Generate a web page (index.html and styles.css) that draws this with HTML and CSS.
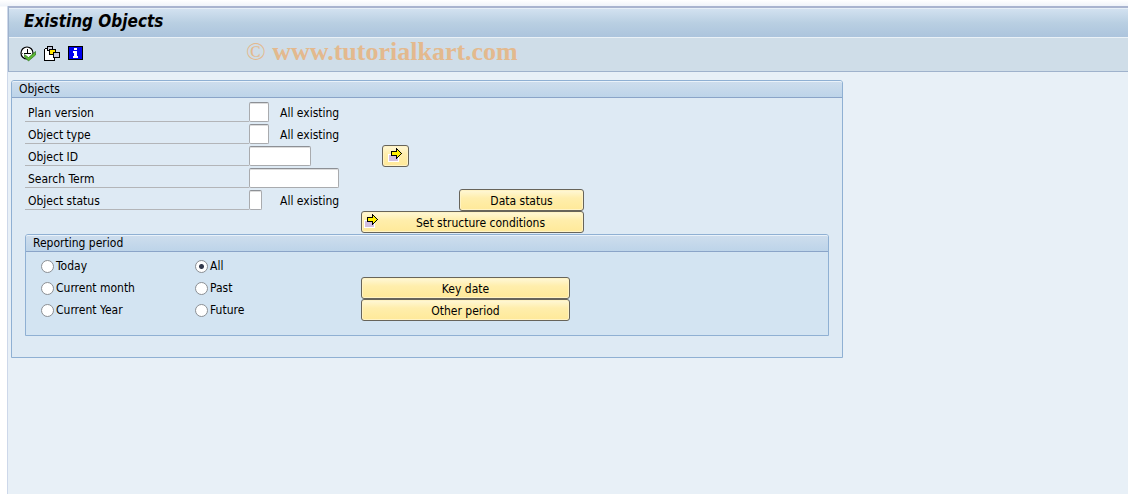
FILE: index.html
```html
<!DOCTYPE html>
<html lang="en">
<head>
  <meta charset="UTF-8">
  <title>Existing Objects</title>
  <meta name="viewport" content="width=device-width, initial-scale=1.0">
  <link rel="stylesheet" href="styles.css">
</head>
<body>
  <svg class="defs" width="0" height="0" aria-hidden="true">
    <symbol id="arrow" viewBox="0 0 16 16">
      <path fill="#fff" d="M0 6h11v8H0z"/>
      <path fill="#d2bfdf" d="M1 7h9v6H1z"/>
      <path fill="#000" d="M3 3h5V0h1v1h1v1h1v1h1v1h1v1h1v1h-1v1h-1v1h-1v1h-1v1H9v1H8V8H3z"/>
      <path fill="#ffee00" d="M4 4h5V2h1v1h1v1h1v1h1v1h-1v1h-1v1h-1v1H9V7H4z"/>
    </symbol>
  </svg>

  <div class="window">
    <header class="header">
      <h1 class="title">Existing Objects</h1>
      <div class="toolbar">
        <button type="button" class="tool" aria-label="Execute">
          <svg width="16" height="16" viewBox="0 0 16 16">
            <circle cx="7" cy="7" r="6" fill="#fff" stroke="#000" stroke-width="1.2"/>
            <path d="M7.500 3v5M4 7.500h7" stroke="#000" fill="none"/>
            <path d="M2 7.500h1M7.500 11v1" stroke="#777"/>
            <path d="M4.500 8.500l4 3 7-6v3.500l-7 6-4-4z" fill="#5cb832" stroke="#1e6510" stroke-width=".6"/>
          </svg>
        </button>
        <button type="button" class="tool" aria-label="Get variant">
          <svg width="16" height="16" viewBox="0 0 16 16" shape-rendering="crispEdges">
            <path d="M1 3h10v11H1z" fill="#fff"/>
            <path d="M0 3h1v12H0zM1 14h10v1H1zM10 11h1v4h-1zM1 2h2v1H1z" fill="#000"/>
            <path d="M3 0h6v5H3z" fill="#000"/><path d="M4 1h4v3H4z" fill="#c6c9dc"/>
            <path d="M5 3h7v6H5z" fill="#000"/><path d="M6 4h5v4H6z" fill="#ffe600"/>
            <path d="M9 6h7v6H9z" fill="#000"/><path d="M10 7h5v4h-5z" fill="#c6c9dc"/>
          </svg>
        </button>
        <button type="button" class="tool" aria-label="Information">
          <svg width="16" height="16" viewBox="0 0 16 16" shape-rendering="crispEdges">
            <path d="M0 0h15v14H0z" fill="#000"/>
            <path d="M1 1h13v12H1z" fill="#0000f0"/>
            <path d="M6 2h3v2H6zM5 5h4v5h1v2H5v-2h1V7H5z" fill="#fff"/>
          </svg>
        </button>
      </div>
      <div class="watermark"><span class="copy">©</span> www.tutorialkart.com</div>
    </header>

    <main class="content">
      <section class="group">
        <h2 class="group-title">Objects</h2>
        <form class="group-body">
          <div class="row">
            <label class="label" for="plan">Plan version</label>
            <input class="field w-2" id="plan" type="text">
            <span class="note">All existing</span>
          </div>
          <div class="row">
            <label class="label" for="type">Object type</label>
            <input class="field w-2" id="type" type="text">
            <span class="note">All existing</span>
          </div>
          <div class="row">
            <label class="label" for="object-id">Object ID</label>
            <input class="field w-8" id="object-id" type="text">
            <button type="button" class="btn btn-multi" aria-label="Multiple selection">
              <svg class="icon"><use href="#arrow"/></svg>
            </button>
          </div>
          <div class="row">
            <label class="label" for="term">Search Term</label>
            <input class="field w-12" id="term" type="text">
          </div>
          <div class="row">
            <label class="label" for="status">Object status</label>
            <input class="field w-1" id="status" type="text">
            <span class="note">All existing</span>
            <button type="button" class="btn btn-status">Data status</button>
          </div>
          <div class="row">
            <button type="button" class="btn btn-structure">
              <svg class="icon"><use href="#arrow"/></svg>
              <span class="btn-text">Set structure conditions</span>
            </button>
          </div>

          <section class="group group-inner">
            <h2 class="group-title">Reporting period</h2>
            <div class="periods">
              <label class="radio"><input type="radio" name="period">Today</label>
              <label class="radio"><input type="radio" name="period" checked>All</label>
              <span></span>
              <label class="radio"><input type="radio" name="period">Current month</label>
              <label class="radio"><input type="radio" name="period">Past</label>
              <button type="button" class="btn">Key date</button>
              <label class="radio"><input type="radio" name="period">Current Year</label>
              <label class="radio"><input type="radio" name="period">Future</label>
              <button type="button" class="btn">Other period</button>
            </div>
          </section>
        </form>
      </section>
    </main>
  </div>
</body>
</html>
```
FILE: styles.css
```css
* {
  box-sizing: border-box;
}

body {
  margin: 0;
  min-height: 100vh;
  display: flex;
  padding: 6px 0 0 7px;
  background: linear-gradient(#ffffff, #eff3f9 6px, #ffffff 7px);
  color: #000;
  font-family: "DejaVu Sans Condensed", "DejaVu Sans", sans-serif;
  font-size: 12px;
  line-height: 16px;
}

.defs {
  position: absolute;
}

.window {
  flex: 1;
  border-left: 1px solid #cdd8ea;
  background: #e8f0f7;
}

/* title and toolbar */
.header {
  position: relative;
  border: 1px solid #9fb2cc;
  border-right: none;
  border-top-width: 2px;
  border-top-color: #a9b4cf;
  background: #cfdde8;
}

.title {
  margin: 0;
  padding: 0 15px;
  height: 30px;
  border-top: 1px solid #e6eff7;
  border-bottom: 1px solid #eaf1f7;
  background: linear-gradient(#d2e1f0, #b9cfe2 50%, #acc4dd);
  font-size: 17px;
  line-height: 24px;
  font-weight: bold;
  font-style: italic;
}

.toolbar {
  display: flex;
  align-items: center;
  gap: 8px;
  padding: 8px 11px 9px;
}

.tool {
  display: block;
  height: 16px;
  padding: 0;
  border: none;
  background: none;
}

.tool svg {
  display: block;
}

.watermark {
  position: absolute;
  left: 237px;
  top: 29px;
  color: #e3b98e;
  font-family: "Liberation Serif", serif;
  font-size: 26px;
  line-height: 30px;
  font-weight: bold;
}

.copy {
  font-weight: normal;
}

/* group boxes */
.content {
  padding: 8px 3px;
}

.group {
  max-width: 832px;
  border: 1px solid #8fb0d3;
  border-radius: 3px 3px 0 0;
  background: #deeaf4;
}

.group-title {
  margin: 0;
  padding: 0 7px;
  height: 17px;
  border-top: 1px solid #e9f2fa;
  border-bottom: 1px solid #8aa4c8;
  border-radius: 2px 2px 0 0;
  background: linear-gradient(#cddded, #bdd4e9);
  font-size: 12px;
  line-height: 15px;
  font-weight: normal;
}

.group-body {
  padding: 3px 13px 21px;
}

.group-inner {
  margin-top: 1px;
  background: #d3e4f2;
}

/* selection fields */
.row {
  display: grid;
  grid-template-columns: 224px 31px 81px 223px;
  align-items: center;
  height: 22px;
}

.label {
  height: 20px;
  padding: 3px 3px 0;
  border-bottom: 1px solid #b3b5b8;
}

.note {
  padding-top: 2px;
}

.field {
  height: 20px;
  padding: 0 3px;
  border: 1px solid #a9abae;
  border-top-color: #8d9095;
  border-radius: 2px;
  background: #fff;
  box-shadow: inset 0 1px #dcdcdc;
  font: inherit;
}

.w-1 { width: 13px; }
.w-2 { width: 20px; }
.w-8 { width: 62px; grid-column: span 2; }
.w-12 { width: 90px; grid-column: span 2; }

.btn {
  display: flex;
  align-items: center;
  justify-content: center;
  height: 22px;
  padding: 1px 2px 0;
  border: 1px solid #67645a;
  border-radius: 3px;
  background: linear-gradient(#fff8d8, #ffeeac 40%, #ffe999);
  box-shadow: inset 0 0 0 1px #fff3c4;
  color: #000;
  font: inherit;
}

.btn-multi {
  width: 27px;
  margin-left: 21px;
}

.btn-status {
  width: 125px;
  justify-self: end;
}

.btn-structure {
  grid-column: 4;
}

.btn-text {
  flex: 1;
}

.icon {
  width: 16px;
  height: 16px;
  margin-bottom: 2px;
  flex: none;
  shape-rendering: crispEdges;
}

/* reporting period */
.periods {
  display: grid;
  grid-template-columns: 154px 166px 209px;
  grid-auto-rows: 22px;
  padding: 3px 15px 14px;
}

.radio {
  display: flex;
  align-items: center;
  gap: 2px;
}

.radio input {
  appearance: none;
  width: 13px;
  height: 13px;
  margin: 0;
  border: 1px solid #8b8f94;
  border-radius: 50%;
  background: #fff;
}

.radio input:checked {
  background: radial-gradient(circle, #343a4c 2px, #fff 3px);
}
```
